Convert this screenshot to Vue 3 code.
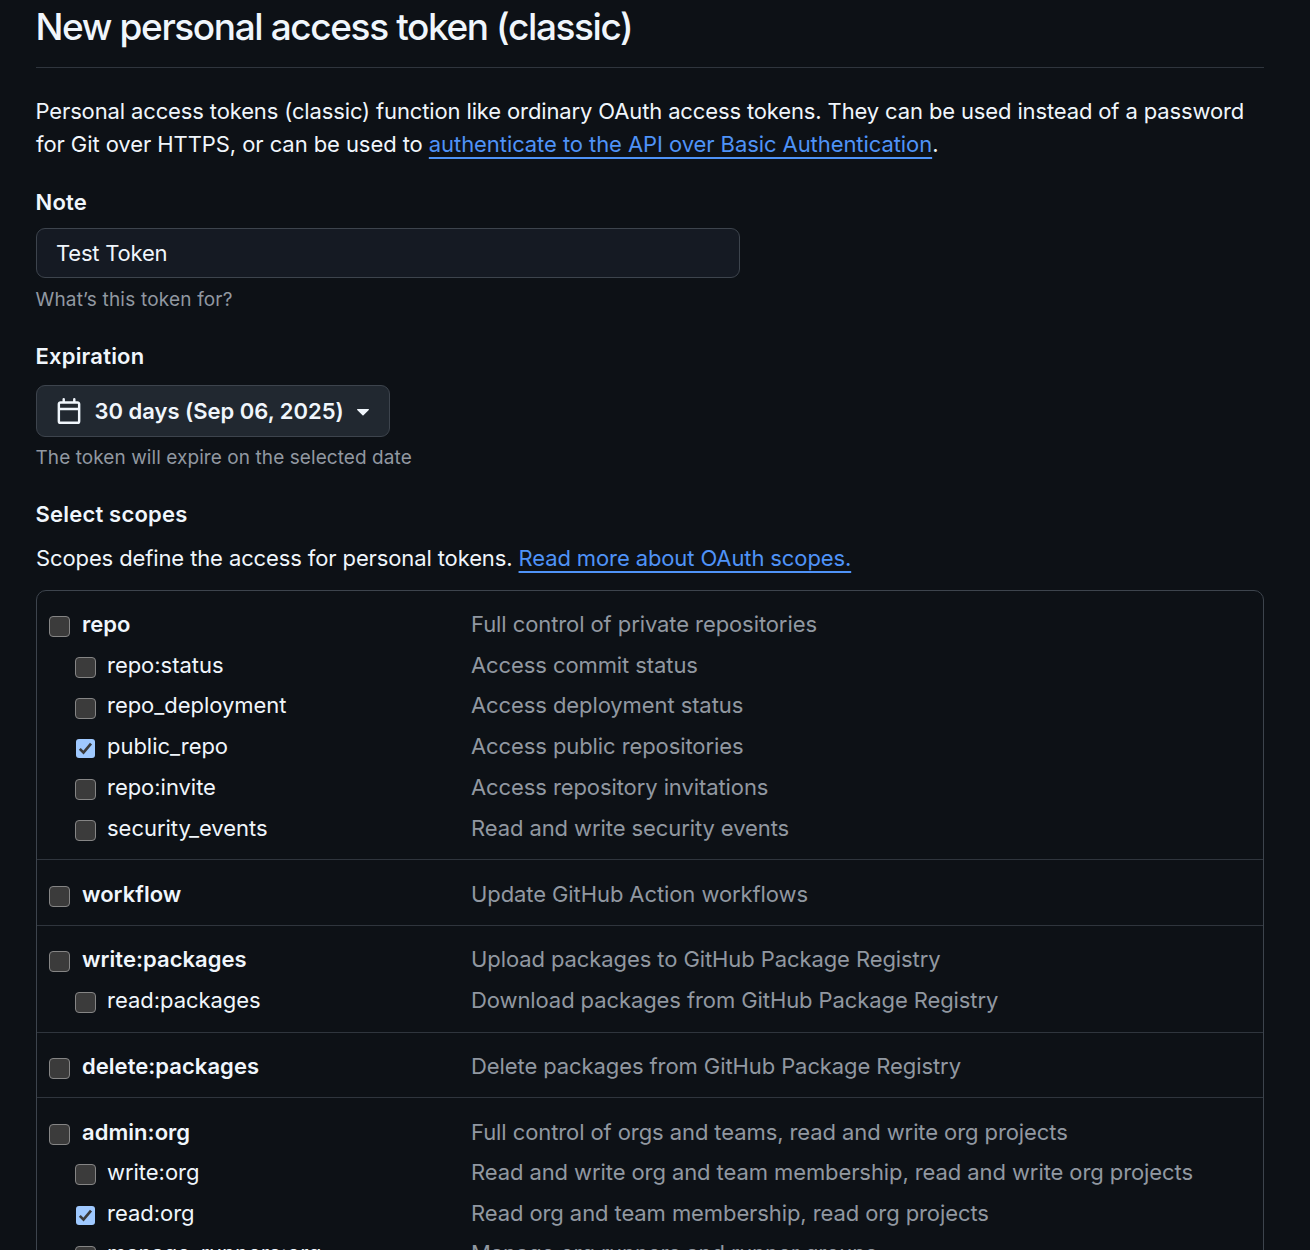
<script setup>
const groups = [
  {
    rows: [
      { name: 'repo', desc: 'Full control of private repositories' },
      { name: 'repo:status', desc: 'Access commit status' },
      { name: 'repo_deployment', desc: 'Access deployment status' },
      { name: 'public_repo', desc: 'Access public repositories', checked: true },
      { name: 'repo:invite', desc: 'Access repository invitations' },
      { name: 'security_events', desc: 'Read and write security events' },
    ],
  },
  { rows: [{ name: 'workflow', desc: 'Update GitHub Action workflows' }] },
  {
    rows: [
      { name: 'write:packages', desc: 'Upload packages to GitHub Package Registry' },
      { name: 'read:packages', desc: 'Download packages from GitHub Package Registry' },
    ],
  },
  { rows: [{ name: 'delete:packages', desc: 'Delete packages from GitHub Package Registry' }] },
  {
    rows: [
      { name: 'admin:org', desc: 'Full control of orgs and teams, read and write org projects' },
      { name: 'write:org', desc: 'Read and write org and team membership, read and write org projects' },
      { name: 'read:org', desc: 'Read org and team membership, read org projects', checked: true },
      { name: 'manage_runners:org', desc: 'Manage org runners and runner groups' },
    ],
  },
]
</script>

<template>
  <main class="page">
    <h1>New personal access token (classic)</h1>
    <p class="intro">
      Personal access tokens (classic) function like ordinary OAuth access tokens. They can be used instead of a password<br />
      <span class="second">for Git over HTTPS, or can be used to <a>authenticate to the API over Basic Authentication</a>.</span>
    </p>

    <h2 class="note-label">Note</h2>
    <div class="field">Test Token</div>
    <p class="hint note-hint">What’s this token for?</p>

    <h2 class="exp-label">Expiration</h2>
    <button class="picker" type="button">
      <svg class="cal" width="26" height="26" viewBox="0 0 16 16" fill="currentColor">
        <path d="M4.75 0a.75.75 0 0 1 .75.75V2h5V.75a.75.75 0 0 1 1.5 0V2h1.25c.966 0 1.75.784 1.75 1.75v10.5A1.75 1.75 0 0 1 13.25 16H2.75A1.75 1.75 0 0 1 1 14.25V3.75C1 2.784 1.784 2 2.75 2H4V.75A.75.75 0 0 1 4.75 0ZM2.5 7.5v6.75c0 .138.112.25.25.25h10.5a.25.25 0 0 0 .25-.25V7.5Zm10.75-4H2.75a.25.25 0 0 0-.25.25V6h11V3.75a.25.25 0 0 0-.25-.25Z" />
      </svg>
      <span class="picker-text">30 days (Sep 06, 2025)</span>
      <svg class="caret" width="12" height="7" viewBox="0 0 12 7" fill="currentColor">
        <path d="M.6 0h10.8c.5 0 .8.6.4 1L6.5 6.3a.7.7 0 0 1-1 0L.2 1C-.2.6.1 0 .6 0Z" />
      </svg>
    </button>
    <p class="hint exp-hint">The token will expire on the selected date</p>

    <h2 class="scope-label">Select scopes</h2>
    <p class="scope-intro">Scopes define the access for personal tokens. <a>Read more about OAuth scopes.</a></p>

    <section class="scopes">
      <div v-for="(group, g) in groups" :key="g" class="group">
        <div v-for="(row, i) in group.rows" :key="row.name" class="row" :class="{ child: i > 0 }">
          <span class="box" :class="{ on: row.checked }">
            <svg v-if="row.checked" width="19" height="19" viewBox="0 0 19 19" fill="none" stroke="#3b3b3b" stroke-width="2.7">
              <path d="M3.8 9.9 7.5 13.6 15 4.7" />
            </svg>
          </span>
          <span class="name">{{ row.name }}</span>
          <span class="desc">{{ row.desc }}</span>
        </div>
      </div>
    </section>
  </main>
</template>

<style>
html,
body {
  background: #0d1116;
  overflow: hidden;
}
</style>

<style scoped>
.page {
  box-sizing: border-box;
  height: 1250px;
  overflow: hidden;
  padding: 0 46px 0 36px;
  background: #0d1116;
  color: #f0f6fc;
  font-family: Inter, "Liberation Sans", sans-serif;
  font-size: 22px;
  font-weight: 430;
  line-height: 33px;
  white-space: nowrap;
}
h1, h2, p { margin: 0; }
h1 {
  box-sizing: border-box;
  height: 68px;
  padding-top: 3px;
  border-bottom: 1px solid #2f353d;
  font-size: 37px;
  font-weight: 450;
  line-height: 48px;
  letter-spacing: -1.39px;
  text-indent: -0.5px;
}
.intro {
  margin-top: 27px;
  letter-spacing: -0.133px;
  text-indent: -0.5px;
}
.second { letter-spacing: -0.075px; }
a {
  color: #4f93f8;
  text-decoration: underline;
  text-decoration-thickness: 2px;
  text-underline-offset: 5px;
  text-decoration-skip-ink: none;
}
h2 {
  font-size: 22px;
  font-weight: 620;
  line-height: 33px;
  letter-spacing: 0.2px;
  text-indent: -0.5px;
}
.note-label { margin-top: 25px; }
.field {
  box-sizing: border-box;
  width: 704px;
  height: 50px;
  margin-top: 9px;
  padding-left: 19px;
  border: 1px solid #3d444d;
  border-radius: 9px;
  background: #151a23;
  line-height: 48px;
  letter-spacing: -0.2px;
}
.hint {
  color: #9198a1;
  font-size: 19px;
  line-height: 28px;
  letter-spacing: 0.075px;
  text-indent: -0.5px;
}
.note-hint {
  margin-top: 8px;
  letter-spacing: 0.19px;
}
.exp-label { margin-top: 26px; }
.picker {
  display: flex;
  align-items: center;
  box-sizing: border-box;
  width: 354px;
  height: 52px;
  margin-top: 12px;
  padding: 0 0 0 19px;
  border: 1px solid #3d444d;
  border-radius: 9px;
  background: #212830;
  color: #f0f6fc;
  font: 600 22px/33px Inter, "Liberation Sans", sans-serif;
  letter-spacing: -0.01px;
}
.picker-text { width: 249px; margin-left: 12.5px; text-align: left; }
.caret { margin: 2px 0 0 13.5px; }
.exp-hint { margin-top: 7px; }
.scope-label { margin-top: 26px; }
.scope-intro {
  margin-top: 11px;
  letter-spacing: -0.115px;
}
.scopes {
  margin-top: 14.8px;
  border: 1px solid #3d444d;
  border-radius: 10px;
}
.group {
  padding: 13.1px 0 10.9px;
  border-bottom: 1px solid #2f353d;
}
.row {
  display: flex;
  align-items: center;
  height: 40.75px;
  padding-left: 12px;
}
.child { padding-left: 38px; }
.box {
  box-sizing: border-box;
  display: flex;
  flex: none;
  width: 21px;
  height: 21px;
  margin: 4.6px 0 0;
  border: 1px solid #858585;
  border-radius: 4px;
  background: #3b3b3b;
}
.on {
  width: 19px;
  height: 19px;
  margin: 4.2px 1px 0;
  border: 0;
  border-radius: 3px;
  background: #9fc9ff;
}
.name,
.desc {
  margin-top: 0.8px;
}
.name {
  flex: none;
  width: 389px;
  margin-left: 12px;
  font-weight: 620;
  letter-spacing: 0.04px;
}
.child .name,
.child .desc {
  margin-top: 0;
}
.child .name {
  width: 364px;
  margin-left: 11px;
  font-weight: 430;
  letter-spacing: -0.03px;
}
.desc {
  color: #9198a1;
  letter-spacing: -0.09px;
}
</style>
